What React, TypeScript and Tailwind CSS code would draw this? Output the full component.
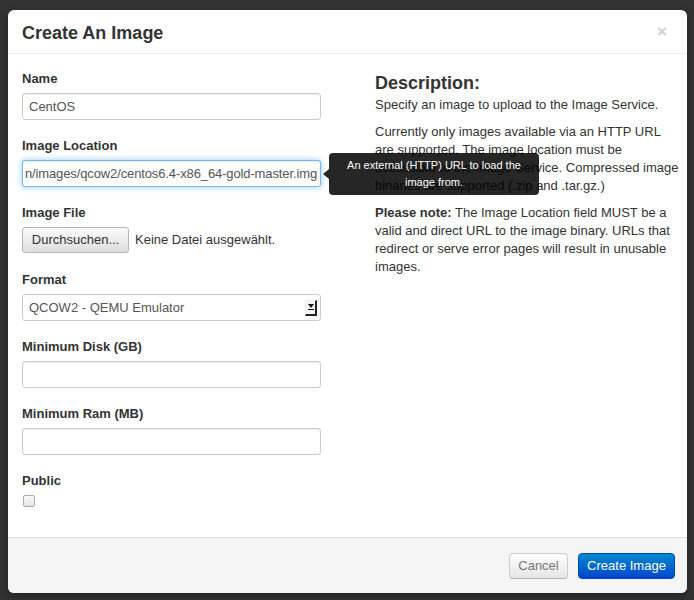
import React from "react";

const font = { fontFamily: '"Liberation Sans", Arial, sans-serif' };

function Label({ children }: { children: React.ReactNode }) {
  return (
    <div className="text-[13px] leading-[18px] font-bold text-[#333] mb-[5px]">
      {children}
    </div>
  );
}

function TextInput({ value = "" }: { value?: string }) {
  return (
    <div className="h-[27px] w-[299px] rounded-[3px] border border-[#ccc] bg-white px-[6px] text-[13px] leading-[25px] text-[#555] shadow-[inset_0_1px_1px_rgba(0,0,0,0.075)]">
      {value}
    </div>
  );
}

function SelectArrow() {
  return (
    <div className="flex h-[16px] w-[12px] flex-col items-center justify-center gap-[1px] border-r-2 border-b-2 border-[#222] border-l border-t border-l-[#eee] border-t-[#eee] bg-[#f4f4f4]">
      <svg width="6" height="4" viewBox="0 0 6 4">
        <path d="M0 0 L6 0 L3 4 Z" fill="#111" />
      </svg>
      <div className="h-[1px] w-[6px] bg-[#111]" />
    </div>
  );
}

export default function App() {
  return (
    <div className="w-[694px] h-[600px] bg-[#323232] pt-[10px] pl-[8px]" style={font}>
      <div className="flex h-[583px] w-[679px] flex-col overflow-hidden rounded-[6px] bg-white shadow-[0_3px_7px_rgba(0,0,0,0.3)]">
        {/* header */}
        <div className="flex h-[44px] shrink-0 items-center justify-between border-b border-[#eee] pl-[14px] pr-[20px]">
          <h3 className="text-[18px] font-bold text-[#333] leading-[20px] pt-[2px]">Create An Image</h3>
          <span className="text-[17px] font-bold leading-[20px] text-[#cfcfcf]">×</span>
        </div>

        {/* body */}
        <div className="flex flex-1 pl-[14px] pt-[16px]">
          <div className="w-[299px] shrink-0">
            <Label>Name</Label>
            <TextInput value="CentOS" />
            <div className="h-[17px]" />

            <Label>Image Location</Label>
            <div className="relative">
              <div className="flex h-[27px] w-[299px] justify-end overflow-hidden whitespace-nowrap rounded-[3px] border border-[rgba(82,168,236,0.8)] bg-white pr-[3px] text-[13px] leading-[25px] tracking-[-0.12px] text-[#555] shadow-[inset_0_1px_1px_rgba(0,0,0,0.075),0_0_6px_rgba(82,168,236,0.6)]">
                n/images/qcow2/centos6.4-x86_64-gold-master.img
              </div>
              <div className="absolute left-[301px] top-1/2 z-10 flex -translate-y-1/2 items-center">
                <div className="h-0 w-0 border-y-[5px] border-r-[6px] border-y-transparent border-r-[rgba(0,0,0,0.85)]" />
                <div className="w-[210px] rounded-[4px] bg-[rgba(0,0,0,0.85)] py-[4px] text-center text-[11px] leading-[17px] text-white">
                  An external (HTTP) URL to load the
                  <br />
                  image from.
                </div>
              </div>
            </div>
            <div className="h-[17px]" />

            <Label>Image File</Label>
            <div className="flex h-[26px] items-center">
              <div className="flex h-[26px] w-[107px] items-center justify-center rounded-[3px] border border-[#b5b5b5] bg-gradient-to-b from-[#fbfbfb] to-[#dedede] text-[13px] text-[#333]">
                Durchsuchen...
              </div>
              <span className="ml-[6px] text-[13px] text-[#333]">Keine Datei ausgewählt.</span>
            </div>
            <div className="h-[18px]" />

            <Label>Format</Label>
            <div className="flex h-[27px] w-[299px] items-center justify-between rounded-[3px] border border-[#ccc] bg-white pl-[6px] pr-[3px] text-[13px] text-[#555]">
              <span>QCOW2 - QEMU Emulator</span>
              <SelectArrow />
            </div>
            <div className="h-[17px]" />

            <Label>Minimum Disk (GB)</Label>
            <TextInput />
            <div className="h-[17px]" />

            <Label>Minimum Ram (MB)</Label>
            <TextInput />
            <div className="h-[17px]" />

            <Label>Public</Label>
            <div className="ml-[1px] mt-[2px] h-[12px] w-[12px] rounded-[2px] border border-[#aaa] bg-gradient-to-b from-[#fafafa] to-[#e4e4e4]" />
          </div>

          <div className="ml-[54px] w-[300px] text-[13px] leading-[18px] text-[#333]">
            <h3 className="text-[18px] font-bold leading-[26px] text-[#333]">Description:</h3>
            <p className="mb-[9px]">Specify an image to upload to the Image Service.</p>
            <p className="mb-[9px] whitespace-nowrap">
              Currently only images available via an HTTP URL
              <br />
              are supported. The image location must be
              <br />
              accessible to the Image Service. Compressed image
              <br />
              binaries are supported (.zip and .tar.gz.)
            </p>
            <p className="whitespace-nowrap">
              <b>Please note:</b> The Image Location field MUST be a
              <br />
              valid and direct URL to the image binary. URLs that
              <br />
              redirect or serve error pages will result in unusable
              <br />
              images.
            </p>
          </div>
        </div>

        {/* footer */}
        <div className="flex h-[56px] shrink-0 items-center justify-end gap-[10px] border-t border-[#ddd] bg-[#f5f5f5] pr-[12px]">
          <div className="flex h-[26px] w-[59px] items-center justify-center rounded-[4px] border border-[#ccc] border-b-[#b3b3b3] bg-gradient-to-b from-white to-[#e6e6e6] text-[13px] text-[#777] shadow-[inset_0_1px_0_rgba(255,255,255,0.2)]">
            Cancel
          </div>
          <div className="flex h-[26px] w-[97px] items-center justify-center rounded-[4px] border border-[#0044cc] bg-gradient-to-b from-[#0088cc] to-[#0044cc] text-[13px] text-white">
            Create Image
          </div>
        </div>
      </div>
    </div>
  );
}
